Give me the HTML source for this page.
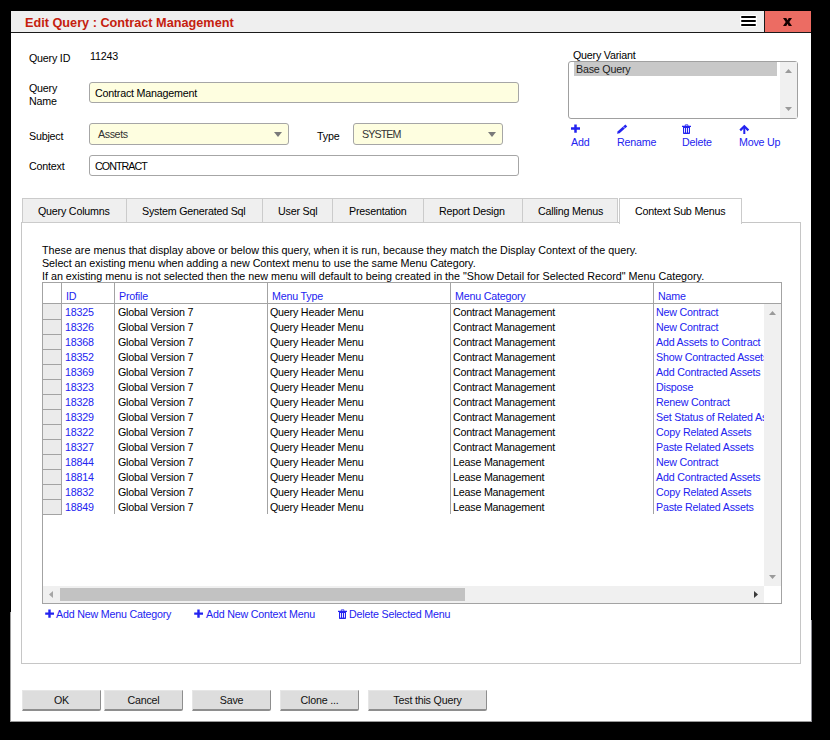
<!DOCTYPE html>
<html><head><meta charset="utf-8">
<style>
*{box-sizing:border-box;margin:0;padding:0}
html,body{width:830px;height:740px;overflow:hidden;background:#000}
body{position:relative;font-family:"Liberation Sans",sans-serif;font-size:10.7px;color:#000}
.a{position:absolute;white-space:nowrap;line-height:13px;letter-spacing:-0.2px}
#dlg{position:absolute;left:11px;top:11px;width:800px;height:710px;background:#fff}
#title{position:absolute;left:11px;top:11px;width:753px;height:21px;background:#efefef}
#tline{position:absolute;left:11px;top:32px;width:800px;height:1px;background:#1a1a1a}
#close{position:absolute;left:765px;top:11px;width:46px;height:21px;background:#ec6c63}
#csep{position:absolute;left:764px;top:11px;width:1px;height:21px;background:#1a1a1a}
.ttl{font-weight:bold;font-size:12.7px;color:#c5200e;letter-spacing:0}
.inp{position:absolute;border:1px solid #a6a6a6;border-radius:3px;background:#fefee0}
.lbl{}
.blue{color:#2323f0}
.tab{position:absolute;top:198px;height:25px;background:#efefef;border:1px solid #cbcbcb}
.btn{position:absolute;top:690px;height:21px;background:#dddddd;border-top:1px solid #e6e6e6;border-left:1px solid #e6e6e6;border-right:1px solid #8e8e8e;border-bottom:2px solid #8e8e8e;border-radius:0 0 2px 0;text-align:center;line-height:17px;padding-top:1px;color:#111;letter-spacing:-0.2px}
</style></head><body>
<div id="dlg"></div>
<div style="position:absolute;left:10px;top:721px;width:802px;height:1px;background:#9a9a9a"></div>
<div style="position:absolute;left:811px;top:620px;width:1px;height:102px;background:#8c8c94"></div>
<div style="position:absolute;left:10px;top:612px;width:1px;height:110px;background:#9c9c9c"></div>
<div id="title"></div>
<div id="tline"></div>
<div id="csep"></div>
<div id="close"></div>
<div class="a ttl" style="left:25px;top:16px;line-height:15px">Edit Query : Contract Management</div>
<!-- hamburger -->
<div style="position:absolute;left:740px;top:15px;width:17px;height:12px;background:#fff;border-radius:2px"></div>
<div style="position:absolute;left:741px;top:16px;width:15px;height:2px;background:#000;border-radius:1px"></div>
<div style="position:absolute;left:741px;top:20px;width:15px;height:2px;background:#000;border-radius:1px"></div>
<div style="position:absolute;left:741px;top:24px;width:15px;height:2px;background:#000;border-radius:1px"></div>
<svg style="position:absolute;left:778px;top:12px" width="20" height="20" viewBox="778 12 20 20"><path d="M783 18 H786.3 L787.5 20.2 L788.7 18 H792 L789.3 22 L792 26 H788.7 L787.5 23.8 L786.3 26 H783 L785.7 22 Z" fill="#140000"/></svg>

<!-- form -->
<div class="a" style="left:29px;top:52px">Query ID</div>
<div class="a" style="left:90px;top:50px">11243</div>
<div class="a" style="left:29px;top:82px;line-height:12.7px">Query<br>Name</div>
<div class="inp" style="left:89px;top:82px;width:430px;height:21px"></div>
<div class="a" style="left:95px;top:87px">Contract Management</div>

<div class="a" style="left:29px;top:130px">Subject</div>
<div class="inp" style="left:89px;top:123px;width:200px;height:22px"></div>
<div class="a" style="left:98px;top:128px;color:#333;letter-spacing:-0.4px">Assets</div>
<svg style="position:absolute;left:274px;top:132px" width="8" height="5"><path d="M0 0 H8 L4 5 Z" fill="#7a7a7a"/></svg>

<div class="a" style="left:317px;top:130px">Type</div>
<div class="inp" style="left:353px;top:123px;width:150px;height:22px"></div>
<div class="a" style="left:362px;top:128px;color:#333;letter-spacing:-0.9px">SYSTEM</div>
<svg style="position:absolute;left:488px;top:132px" width="8" height="5"><path d="M0 0 H8 L4 5 Z" fill="#7a7a7a"/></svg>

<div class="a" style="left:29px;top:160px">Context</div>
<div class="inp" style="left:89px;top:155px;width:430px;height:21px;background:#fff"></div>
<div class="a" style="left:95px;top:160px;letter-spacing:-0.95px">CONTRACT</div>

<!-- query variant -->
<div class="a" style="left:573px;top:49px">Query Variant</div>
<div class="inp" style="left:568px;top:61px;width:230px;height:58px;background:#fff;border-color:#a0a0a0"></div>
<div style="position:absolute;left:574px;top:62px;width:203px;height:14px;background:#c8c8c8"></div>
<div class="a" style="left:576px;top:63px;color:#222">Base Query</div>
<div style="position:absolute;left:780px;top:62px;width:17px;height:56px;background:#f0f0f0"></div>
<svg style="position:absolute;left:785px;top:69px" width="7" height="4"><path d="M0 4 H7 L3.5 0 Z" fill="#9a9a9a"/></svg>
<svg style="position:absolute;left:785px;top:107px" width="7" height="4"><path d="M0 0 H7 L3.5 4 Z" fill="#9a9a9a"/></svg>

<!-- links -->
<svg style="position:absolute;left:566px;top:120px" width="18" height="18" viewBox="566 120 18 18"><path d="M571 128.5 H580 M575.5 124.4 V132.8" stroke="#2323f0" stroke-width="2.5"/></svg>
<div class="a blue" style="left:571px;top:136px">Add</div>
<svg style="position:absolute;left:612px;top:120px" width="20" height="20" viewBox="612 120 20 20"><path d="M617 133.8 L617.76 131.34 L625.41 124.59 L627.19 126.61 L619.54 133.36 Z" fill="#2323f0"/><path d="M624.94 128.6 L623.16 126.58" stroke="#fff" stroke-width="0.7"/></svg>
<div class="a blue" style="left:617px;top:136px">Rename</div>
<svg style="position:absolute;left:678px;top:120px" width="18" height="18" viewBox="678 120 18 18"><path d="M682 126.4 H691" stroke="#2323f0" stroke-width="1.3"/><path d="M685.3 126.2 V124.8 H687.9 V126.2" stroke="#2323f0" stroke-width="0.8" fill="none"/><path d="M683 127 H690 V133.3 Q690 134 689.3 134 H683.7 Q683 134 683 133.3 Z" fill="#2323f0"/><path d="M684.5 128 V132.6 M686.5 128 V132.6 M688.5 128 V132.6" stroke="#fff" stroke-width="0.9"/></svg>
<div class="a blue" style="left:682px;top:136px">Delete</div>
<svg style="position:absolute;left:736px;top:120px" width="18" height="18" viewBox="736 120 18 18"><path d="M740.2 130.4 L744.3 126.3 L748.4 130.4" stroke="#2323f0" stroke-width="2.2" fill="none"/><path d="M744.3 127 V134" stroke="#2323f0" stroke-width="2"/></svg>
<div class="a blue" style="left:739px;top:136px">Move Up</div>

<!-- tabs -->
<div style="position:absolute;left:21px;top:222px;width:780px;height:442px;border:1px solid #c6c6c6"></div>
<div class="tab" style="left:22px;width:105px"></div>
<div class="tab" style="left:126px;width:137px"></div>
<div class="tab" style="left:262px;width:71px"></div>
<div class="tab" style="left:332px;width:92px"></div>
<div class="tab" style="left:423px;width:100px"></div>
<div class="tab" style="left:522px;width:96px"></div>
<div class="tab" style="left:619px;width:123px;height:26px;background:#fff;border-bottom:none"></div>
<div class="a" style="left:38px;top:205px">Query Columns</div>
<div class="a" style="left:142px;top:205px">System Generated Sql</div>
<div class="a" style="left:278px;top:205px">User Sql</div>
<div class="a" style="left:349px;top:205px">Presentation</div>
<div class="a" style="left:439px;top:205px">Report Design</div>
<div class="a" style="left:538px;top:205px">Calling Menus</div>
<div class="a" style="left:635px;top:205px">Context Sub Menus</div>

<div class="a" style="left:42px;top:244px;font-size:10.76px;letter-spacing:0">These are menus that display above or below this query, when it is run, because they match the Display Context of the query.</div>
<div class="a" style="left:42px;top:257px;font-size:10.76px;letter-spacing:-0.05px">Select an existing menu when adding a new Context menu to use the same Menu Category.</div>
<div class="a" style="left:42px;top:270px;font-size:10.76px;letter-spacing:-0.01px">If an existing menu is not selected then the new menu will default to being created in the "Show Detail for Selected Record" Menu Category.</div>

<!-- TABLE -->
<!--TBL-->
<div style="position:absolute;left:42px;top:282px;width:740px;height:322px;border:1px solid #a3a3a3"></div>
<div style="position:absolute;left:43px;top:303px;width:738px;height:1px;background:#a3a3a3"></div>
<div style="position:absolute;left:61px;top:283px;width:1px;height:20px;background:#a3a3a3"></div>
<div style="position:absolute;left:114px;top:283px;width:1px;height:20px;background:#a3a3a3"></div>
<div style="position:absolute;left:267px;top:283px;width:1px;height:20px;background:#a3a3a3"></div>
<div style="position:absolute;left:450px;top:283px;width:1px;height:20px;background:#a3a3a3"></div>
<div style="position:absolute;left:653px;top:283px;width:1px;height:20px;background:#a3a3a3"></div>
<div class="a blue" style="left:66px;top:290px">ID</div>
<div class="a blue" style="left:119px;top:290px">Profile</div>
<div class="a blue" style="left:272px;top:290px">Menu Type</div>
<div class="a blue" style="left:455px;top:290px">Menu Category</div>
<div class="a blue" style="left:658px;top:290px">Name</div>
<div style="position:absolute;left:43px;top:304px;width:18px;height:210px;background:#ebebeb"></div>
<div style="position:absolute;left:43px;top:319px;width:18px;height:1px;background:#a3a3a3"></div>
<div style="position:absolute;left:43px;top:334px;width:18px;height:1px;background:#a3a3a3"></div>
<div style="position:absolute;left:43px;top:349px;width:18px;height:1px;background:#a3a3a3"></div>
<div style="position:absolute;left:43px;top:364px;width:18px;height:1px;background:#a3a3a3"></div>
<div style="position:absolute;left:43px;top:379px;width:18px;height:1px;background:#a3a3a3"></div>
<div style="position:absolute;left:43px;top:394px;width:18px;height:1px;background:#a3a3a3"></div>
<div style="position:absolute;left:43px;top:409px;width:18px;height:1px;background:#a3a3a3"></div>
<div style="position:absolute;left:43px;top:424px;width:18px;height:1px;background:#a3a3a3"></div>
<div style="position:absolute;left:43px;top:439px;width:18px;height:1px;background:#a3a3a3"></div>
<div style="position:absolute;left:43px;top:454px;width:18px;height:1px;background:#a3a3a3"></div>
<div style="position:absolute;left:43px;top:469px;width:18px;height:1px;background:#a3a3a3"></div>
<div style="position:absolute;left:43px;top:484px;width:18px;height:1px;background:#a3a3a3"></div>
<div style="position:absolute;left:43px;top:499px;width:18px;height:1px;background:#a3a3a3"></div>
<div style="position:absolute;left:43px;top:514px;width:18px;height:1px;background:#a3a3a3"></div>
<div style="position:absolute;left:61px;top:304px;width:1px;height:211px;background:#a3a3a3"></div>
<div style="position:absolute;left:114px;top:304px;width:1px;height:210px;background:#a3a3a3"></div>
<div style="position:absolute;left:267px;top:304px;width:1px;height:210px;background:#a3a3a3"></div>
<div style="position:absolute;left:450px;top:304px;width:1px;height:210px;background:#a3a3a3"></div>
<div style="position:absolute;left:653px;top:304px;width:1px;height:210px;background:#a3a3a3"></div>
<div class="a blue" style="left:65px;top:306px">18325</div>
<div class="a" style="left:118px;top:306px">Global Version 7</div>
<div class="a" style="left:270px;top:306px">Query Header Menu</div>
<div class="a" style="left:453px;top:306px">Contract Management</div>
<div class="a blue" style="left:65px;top:321px">18326</div>
<div class="a" style="left:118px;top:321px">Global Version 7</div>
<div class="a" style="left:270px;top:321px">Query Header Menu</div>
<div class="a" style="left:453px;top:321px">Contract Management</div>
<div class="a blue" style="left:65px;top:336px">18368</div>
<div class="a" style="left:118px;top:336px">Global Version 7</div>
<div class="a" style="left:270px;top:336px">Query Header Menu</div>
<div class="a" style="left:453px;top:336px">Contract Management</div>
<div class="a blue" style="left:65px;top:351px">18352</div>
<div class="a" style="left:118px;top:351px">Global Version 7</div>
<div class="a" style="left:270px;top:351px">Query Header Menu</div>
<div class="a" style="left:453px;top:351px">Contract Management</div>
<div class="a blue" style="left:65px;top:366px">18369</div>
<div class="a" style="left:118px;top:366px">Global Version 7</div>
<div class="a" style="left:270px;top:366px">Query Header Menu</div>
<div class="a" style="left:453px;top:366px">Contract Management</div>
<div class="a blue" style="left:65px;top:381px">18323</div>
<div class="a" style="left:118px;top:381px">Global Version 7</div>
<div class="a" style="left:270px;top:381px">Query Header Menu</div>
<div class="a" style="left:453px;top:381px">Contract Management</div>
<div class="a blue" style="left:65px;top:396px">18328</div>
<div class="a" style="left:118px;top:396px">Global Version 7</div>
<div class="a" style="left:270px;top:396px">Query Header Menu</div>
<div class="a" style="left:453px;top:396px">Contract Management</div>
<div class="a blue" style="left:65px;top:411px">18329</div>
<div class="a" style="left:118px;top:411px">Global Version 7</div>
<div class="a" style="left:270px;top:411px">Query Header Menu</div>
<div class="a" style="left:453px;top:411px">Contract Management</div>
<div class="a blue" style="left:65px;top:426px">18322</div>
<div class="a" style="left:118px;top:426px">Global Version 7</div>
<div class="a" style="left:270px;top:426px">Query Header Menu</div>
<div class="a" style="left:453px;top:426px">Contract Management</div>
<div class="a blue" style="left:65px;top:441px">18327</div>
<div class="a" style="left:118px;top:441px">Global Version 7</div>
<div class="a" style="left:270px;top:441px">Query Header Menu</div>
<div class="a" style="left:453px;top:441px">Contract Management</div>
<div class="a blue" style="left:65px;top:456px">18844</div>
<div class="a" style="left:118px;top:456px">Global Version 7</div>
<div class="a" style="left:270px;top:456px">Query Header Menu</div>
<div class="a" style="left:453px;top:456px">Lease Management</div>
<div class="a blue" style="left:65px;top:471px">18814</div>
<div class="a" style="left:118px;top:471px">Global Version 7</div>
<div class="a" style="left:270px;top:471px">Query Header Menu</div>
<div class="a" style="left:453px;top:471px">Lease Management</div>
<div class="a blue" style="left:65px;top:486px">18832</div>
<div class="a" style="left:118px;top:486px">Global Version 7</div>
<div class="a" style="left:270px;top:486px">Query Header Menu</div>
<div class="a" style="left:453px;top:486px">Lease Management</div>
<div class="a blue" style="left:65px;top:501px">18849</div>
<div class="a" style="left:118px;top:501px">Global Version 7</div>
<div class="a" style="left:270px;top:501px">Query Header Menu</div>
<div class="a" style="left:453px;top:501px">Lease Management</div>
<div style="position:absolute;left:654px;top:304px;width:110px;height:210px;overflow:hidden"><div class="a blue" style="left:2px;top:2px">New Contract</div><div class="a blue" style="left:2px;top:17px">New Contract</div><div class="a blue" style="left:2px;top:32px">Add Assets to Contract</div><div class="a blue" style="left:2px;top:47px">Show Contracted Assets</div><div class="a blue" style="left:2px;top:62px">Add Contracted Assets</div><div class="a blue" style="left:2px;top:77px">Dispose</div><div class="a blue" style="left:2px;top:92px">Renew Contract</div><div class="a blue" style="left:2px;top:107px">Set Status of Related Assets</div><div class="a blue" style="left:2px;top:122px">Copy Related Assets</div><div class="a blue" style="left:2px;top:137px">Paste Related Assets</div><div class="a blue" style="left:2px;top:152px">New Contract</div><div class="a blue" style="left:2px;top:167px">Add Contracted Assets</div><div class="a blue" style="left:2px;top:182px">Copy Related Assets</div><div class="a blue" style="left:2px;top:197px">Paste Related Assets</div></div>
<div style="position:absolute;left:764px;top:304px;width:17px;height:282px;background:#f0f0f0"></div>
<svg style="position:absolute;left:769px;top:311px" width="7" height="4"><path d="M0 4 H7 L3.5 0 Z" fill="#9a9a9a"/></svg>
<svg style="position:absolute;left:769px;top:575px" width="7" height="4"><path d="M0 0 H7 L3.5 4 Z" fill="#9a9a9a"/></svg>
<div style="position:absolute;left:43px;top:586px;width:721px;height:17px;background:#f0f0f0"></div>
<div style="position:absolute;left:764px;top:586px;width:17px;height:17px;background:#fff"></div>
<div style="position:absolute;left:60px;top:588px;width:405px;height:13px;background:#c2c2c2"></div>
<svg style="position:absolute;left:49px;top:591px" width="4" height="7"><path d="M4 0 V7 L0 3.5 Z" fill="#a6a6a6"/></svg>
<svg style="position:absolute;left:754px;top:591px" width="4" height="7"><path d="M0 0 V7 L4 3.5 Z" fill="#3a3a3a"/></svg>
<!--/TBL-->

<!-- bottom links -->
<svg style="position:absolute;left:42px;top:604px" width="18" height="18" viewBox="42 604 18 18"><path d="M45.2 613.6 H54 M49.5 609.4 V617.7" stroke="#2323f0" stroke-width="2.4"/></svg>
<div class="a blue" style="left:56px;top:608px">Add New Menu Category</div>
<svg style="position:absolute;left:191px;top:604px" width="18" height="18" viewBox="42 604 18 18"><path d="M45.2 613.6 H54 M49.5 609.4 V617.7" stroke="#2323f0" stroke-width="2.4"/></svg>
<div class="a blue" style="left:206px;top:608px">Add New Context Menu</div>
<svg style="position:absolute;left:334px;top:605px" width="18" height="18" viewBox="678 120 18 18"><path d="M682 126.4 H691" stroke="#2323f0" stroke-width="1.3"/><path d="M685.3 126.2 V124.8 H687.9 V126.2" stroke="#2323f0" stroke-width="0.8" fill="none"/><path d="M683 127 H690 V133.3 Q690 134 689.3 134 H683.7 Q683 134 683 133.3 Z" fill="#2323f0"/><path d="M684.5 128 V132.6 M686.5 128 V132.6 M688.5 128 V132.6" stroke="#fff" stroke-width="0.9"/></svg>
<div class="a blue" style="left:349px;top:608px">Delete Selected Menu</div>

<!-- buttons -->
<div class="btn" style="left:22px;width:79px">OK</div>
<div class="btn" style="left:104px;width:79px">Cancel</div>
<div class="btn" style="left:192px;width:79px">Save</div>
<div class="btn" style="left:280px;width:79px">Clone ...</div>
<div class="btn" style="left:368px;width:119px">Test this Query</div>
</body></html>
